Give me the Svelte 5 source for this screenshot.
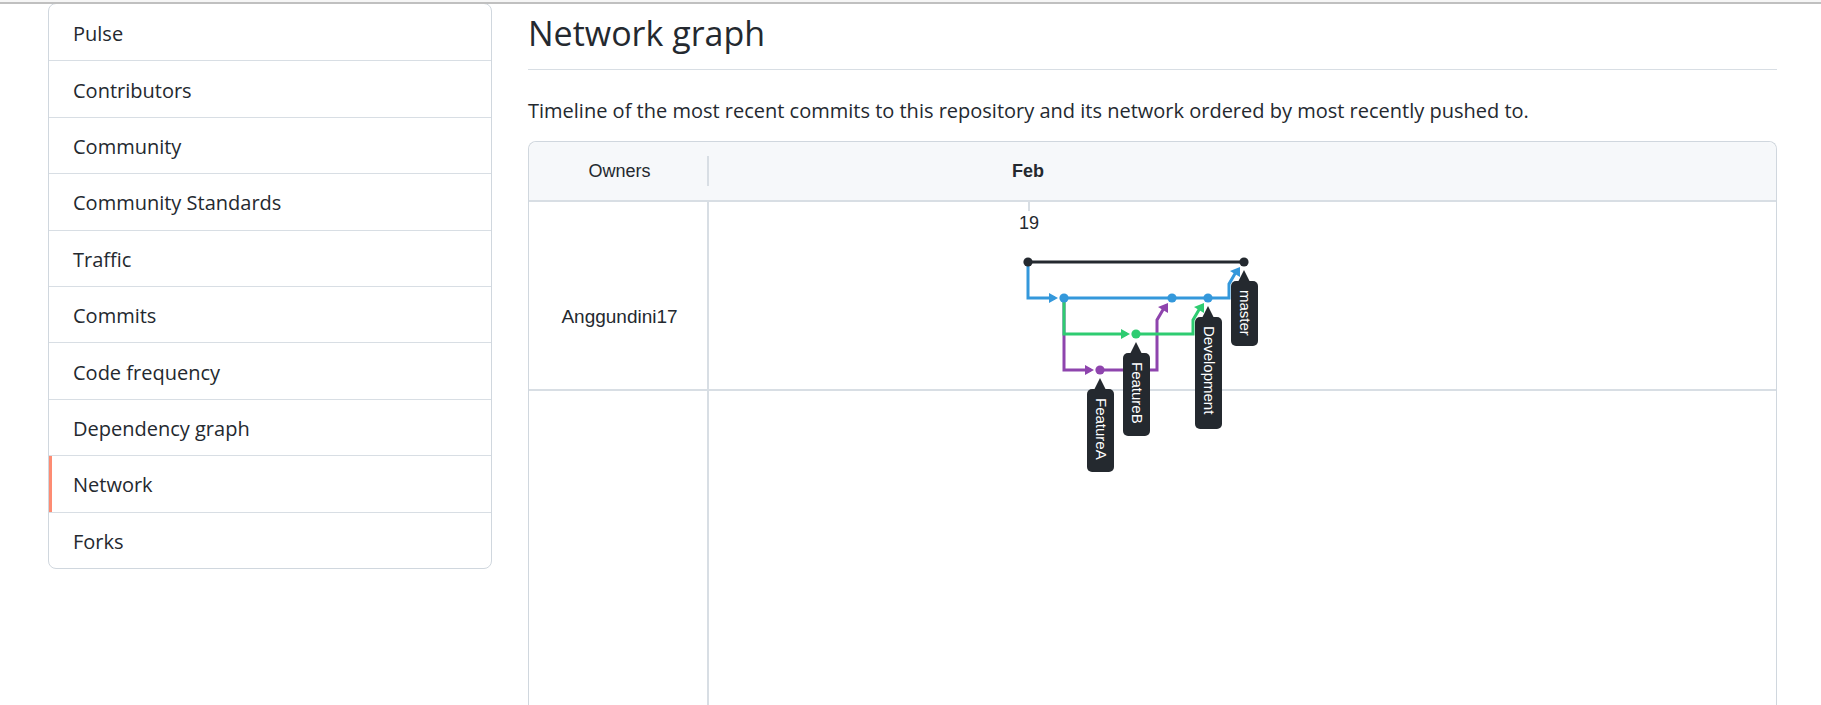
<script>
  const links = ['Pulse', 'Contributors', 'Community', 'Community Standards', 'Traffic', 'Commits', 'Code frequency', 'Dependency graph', 'Network', 'Forks'];
  const current = 'Network';

  const colors = { master: '#24292f', dev: '#3498db', b: '#2ecc71', a: '#8e44ad' };

  const commits = [
    { x: 319, y: 60, color: colors.master },
    { x: 535, y: 60, color: colors.master },
    { x: 355, y: 96, color: colors.dev },
    { x: 463, y: 96, color: colors.dev },
    { x: 499, y: 96, color: colors.dev },
    { x: 427, y: 132, color: colors.b },
    { x: 391, y: 168, color: colors.a }
  ];

  const branches = [
    { name: 'FeatureA', x: 391, y: 168, length: 83 },
    { name: 'FeatureB', x: 427, y: 132, length: 83 },
    { name: 'Development', x: 499, y: 96, length: 112 },
    { name: 'master', x: 535, y: 60, length: 65 }
  ];
</script>

<div class="topbar"></div>
<div class="page">
  <nav class="menu" aria-label="Insights">
    {#each links as link}
      <a href="#{link.toLowerCase().replace(' ', '-')}" class:current={link === current} aria-current={link === current ? 'page' : undefined}>{link}</a>
    {/each}
  </nav>

  <main>
    <h1>Network graph</h1>
    <p>Timeline of the most recent commits to this repository and its network ordered by most recently pushed to.</p>

    <section class="graph">
      <div class="head">
        <div class="owners">Owners</div>
        <div class="months"><span class="month">Feb</span></div>
      </div>
      <div class="row">
        <div class="owner">Anggundini17</div>
        <svg class="timeline" width="640" height="187" viewBox="0 0 640 187" role="img" aria-label="Commit timeline">
          <path d="M320 0v9" stroke="#d8dee4" stroke-width="2" />
          <text x="320" y="27" text-anchor="middle" class="day">19</text>

          <g fill="none" stroke-width="3">
            <path d="M355 96V168H382" stroke={colors.a} />
            <path d="M391 168H448V118L455 106" stroke={colors.a} />
            <path d="M355 96V132H418" stroke={colors.b} />
            <path d="M427 132H484V118L491 106" stroke={colors.b} />
            <path d="M319 60V96H346" stroke={colors.dev} />
            <path d="M355 96H520V82L527 70" stroke={colors.dev} />
            <path d="M319 60H535" stroke={colors.master} />
          </g>
          <path d="M340 91L349 96L340 101Z" fill={colors.dev} />
          <path d="M412 127L421 132L412 137Z" fill={colors.b} />
          <path d="M376 163L385 168L376 173Z" fill={colors.a} />
          <path d="M459 101L459 111L449 105Z" fill={colors.a} />
          <path d="M495 101L495 111L485 105Z" fill={colors.b} />
          <path d="M531 65L531 75L521 69Z" fill={colors.dev} />

          {#each commits as c}
            <circle cx={c.x} cy={c.y} r="4.6" fill={c.color} />
          {/each}

          {#each branches as b}
            <g transform="translate({b.x} {b.y})">
              <path d="M0 8L6 20H-6Z" fill="#24292f" />
              <rect x="-13" y="19" width="27" height={b.length} rx="5" fill="#24292f" />
              <text transform="translate(-4 28) rotate(90)" class="branch">{b.name}</text>
            </g>
          {/each}
        </svg>
      </div>
      <div class="row rest">
        <div class="owner"></div>
      </div>
    </section>
  </main>
</div>

<style>
  :global(body) {
    margin: 0;
    overflow: hidden;
    background: #fff;
    color: #24292f;
    font-family: "Segoe UI", "Open Sans", "Noto Sans", sans-serif;
    font-size: 20px;
  }
  .topbar {
    position: relative;
    height: 2px;
    background: #f6f6f6;
    border-bottom: 2px solid #c0c0c0;
  }
  .page {
    display: flex;
    align-items: flex-start;
    gap: 36px;
    padding: 0 44px 0 48px;
    height: calc(100vh - 4px);
  }
  .menu {
    box-sizing: border-box;
    flex: 0 0 444px;
    display: grid;
    grid-auto-rows: 1fr;
    min-height: 566px;
    margin-top: -1px;
    border: 1px solid #d0d7de;
    border-radius: 8px;
  }
  .menu a {
    display: flex;
    align-items: center;
    padding: 2px 24px 0;
    color: inherit;
    text-decoration: none;
    border-top: 1px solid #d8dee4;
  }
  .menu a:first-child {
    border-top-color: transparent;
  }
  .menu a.current {
    box-shadow: inset 3px 0 #fd8c73;
  }
  main {
    flex: 1;
    min-width: 0;
    align-self: stretch;
    display: flex;
    flex-direction: column;
  }
  h1 {
    margin: 0;
    padding: 5px 0 12px;
    font-size: 34px;
    line-height: 48px;
    font-weight: 400;
    border-bottom: 1px solid #d8dee4;
  }
  p {
    margin: 25px 0 14px;
    line-height: 32px;
  }
  .graph {
    flex: 1;
    display: flex;
    flex-direction: column;
    border: 1px solid #d0d7de;
    border-bottom: 0;
    border-radius: 8px 8px 0 0;
    font-family: "Liberation Sans", Arial, sans-serif;
    font-size: 18px;
  }
  .head,
  .row {
    display: flex;
    border-bottom: 2px solid #d8dee4;
  }
  .head {
    align-items: center;
    height: 58px;
    background: #f6f8fa;
    border-radius: 8px 8px 0 0;
  }
  .owners,
  .owner {
    box-sizing: border-box;
    flex: 0 0 180px;
    padding-left: 3px;
    border-right: 2px solid #d8dee4;
    text-align: center;
    line-height: 30px;
  }
  .months {
    flex: 1;
    line-height: 30px;
  }
  .month {
    display: block;
    width: 638px;
    text-align: center;
    font-weight: 700;
  }
  .owner {
    display: flex;
    align-items: center;
    justify-content: center;
    padding-top: 42px;
    font-size: 19px;
  }
  .timeline {
    overflow: visible;
    position: relative;
  }
  .rest {
    flex: 1;
    border-bottom: 0;
  }
  text {
    font-family: "Liberation Sans", Arial, sans-serif;
    fill: #24292f;
  }
  .day {
    font-size: 18px;
  }
  .branch {
    font-size: 15px;
    fill: #fff;
  }
</style>
